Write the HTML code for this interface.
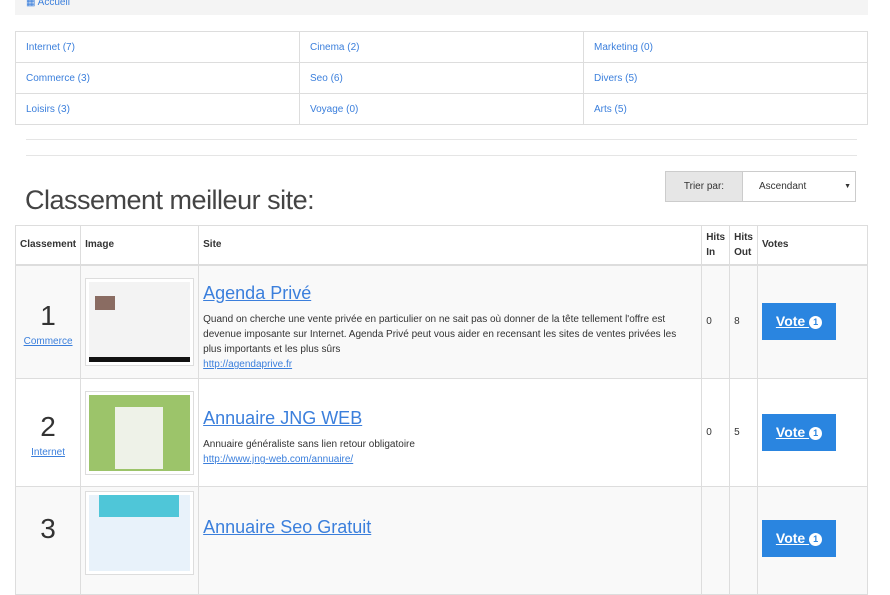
<!DOCTYPE html>
<html><head><meta charset="utf-8"><style>
*{box-sizing:border-box;margin:0;padding:0}
body{width:890px;height:530px;overflow:hidden;background:#fff;font-family:"Liberation Sans",sans-serif;color:#333;font-size:10px;position:relative}
a{color:#3b7fdc;text-decoration:none}
.abs{position:absolute}
.bar{left:15px;top:0;width:853px;height:15px;background:#f4f4f4}
.cat{left:15px;top:31px;width:853px;border-collapse:collapse}
.cat td{border:1px solid #ddd;height:31px;padding-left:10px;width:284px;font-size:10px}
hr{position:absolute;left:26px;width:831px;border:0;border-top:1px solid #e5e5e5}
h1{position:absolute;left:25px;top:185px;font-weight:normal;font-size:27px;color:#444;font-family:"Liberation Sans",sans-serif;letter-spacing:-0.5px}
.main{left:15px;top:225px;width:853px;border-collapse:collapse}
.main td,.main th{border:1px solid #ddd;vertical-align:middle;text-align:left;padding:0 4px}
.main th{font-size:10px;height:39px;font-weight:bold;border-bottom:2px solid #ddd}
.vote{display:inline-block;background:#2a85e0;color:#fff;font-weight:bold;font-size:14px;width:74px;height:37px;line-height:37px;text-align:center;text-decoration:underline}
.vote span{display:inline-block;width:13px;height:13px;border-radius:50%;background:#fff;color:#2a85e0;font-size:9px;line-height:13px;text-decoration:none;vertical-align:middle}
.rank{text-align:center!important}
.rank b{display:block;font-weight:normal;font-size:28px;line-height:40px}
.rank a{text-decoration:underline;font-size:10px}
.thumb{width:109px;border:1px solid #ddd;padding:3px;background:#fff}
.t{font-size:18px;text-decoration:underline;display:block;margin-bottom:8px;font-weight:300}
.d{font-size:10px;line-height:15px}
</style></head><body>
<div class="abs bar"><a style="position:absolute;left:11px;top:-3px;font-size:10px">▦ Accueil</a></div>
<table class="abs cat">
<tr><td><a>Internet (7)</a></td><td><a>Cinema (2)</a></td><td><a>Marketing (0)</a></td></tr>
<tr><td><a>Commerce (3)</a></td><td><a>Seo (6)</a></td><td><a>Divers (5)</a></td></tr>
<tr><td><a>Loisirs (3)</a></td><td><a>Voyage (0)</a></td><td><a>Arts (5)</a></td></tr>
</table>
<hr style="top:139px"><hr style="top:155px">
<h1>Classement meilleur site:</h1>
<div class="abs" style="left:665px;top:171px;width:78px;height:31px;background:#e6e6e6;border:1px solid #ccc;text-align:center;line-height:29px;font-size:10px">Trier par:</div>
<div class="abs" style="left:743px;top:171px;width:113px;height:31px;border:1px solid #ccc;border-left:0;line-height:29px;padding-left:16px;font-size:10px">Ascendant<span style="position:absolute;right:4px;font-size:7px">▼</span></div>
<table class="abs main">
<tr><th style="width:65px">Classement</th><th style="width:117px">Image</th><th>Site</th><th style="width:27px;line-height:15px">Hits In</th><th style="width:27px;line-height:15px">Hits Out</th><th style="width:110px">Votes</th></tr>
<tr style="background:#f9f9f9;height:114px"><td class="rank"><b>1</b><a>Commerce</a></td>
<td><div class="thumb"><div style="height:80px;background:#f3f3f3;position:relative"><div style="position:absolute;left:6px;top:14px;width:20px;height:14px;background:#8a6c62"></div><div style="position:absolute;left:0;bottom:0;width:100%;height:5px;background:#111"></div></div></div></td>
<td style="padding-top:12px"><a class="t">Agenda Privé</a><div class="d">Quand on cherche une vente privée en particulier on ne sait pas où donner de la tête tellement l'offre est devenue imposante sur Internet. Agenda Privé peut vous aider en recensant les sites de ventes privées les plus importants et les plus sûrs<br><a style="text-decoration:underline">http://agendaprive.fr</a></div></td>
<td>0</td><td>8</td><td><a class="vote">Vote <span>1</span></a></td></tr>
<tr style="height:108px"><td class="rank"><b>2</b><a>Internet</a></td>
<td><div class="thumb"><div style="height:76px;background:#9cc46a;position:relative"><div style="position:absolute;left:26px;top:12px;width:48px;height:62px;background:#eef2e8"></div></div></div></td>
<td style="padding-top:10px"><a class="t">Annuaire JNG WEB</a><div class="d">Annuaire généraliste sans lien retour obligatoire<br><a style="text-decoration:underline">http://www.jng-web.com/annuaire/</a></div></td>
<td>0</td><td>5</td><td><a class="vote">Vote <span>1</span></a></td></tr>
<tr style="background:#f9f9f9;height:108px;vertical-align:top"><td class="rank" style="vertical-align:top;padding-top:22px"><b>3</b></td>
<td style="vertical-align:top;padding-top:4px"><div class="thumb"><div style="height:76px;background:#e8f2fa;position:relative"><div style="position:absolute;left:10px;top:0;width:80px;height:22px;background:#4fc6d8"></div></div></div></td>
<td style="vertical-align:top;padding-top:30px"><a class="t">Annuaire Seo Gratuit</a></td>
<td></td><td></td><td style="vertical-align:top;padding-top:33px"><a class="vote">Vote <span>1</span></a></td></tr>
</table>
</body></html>
